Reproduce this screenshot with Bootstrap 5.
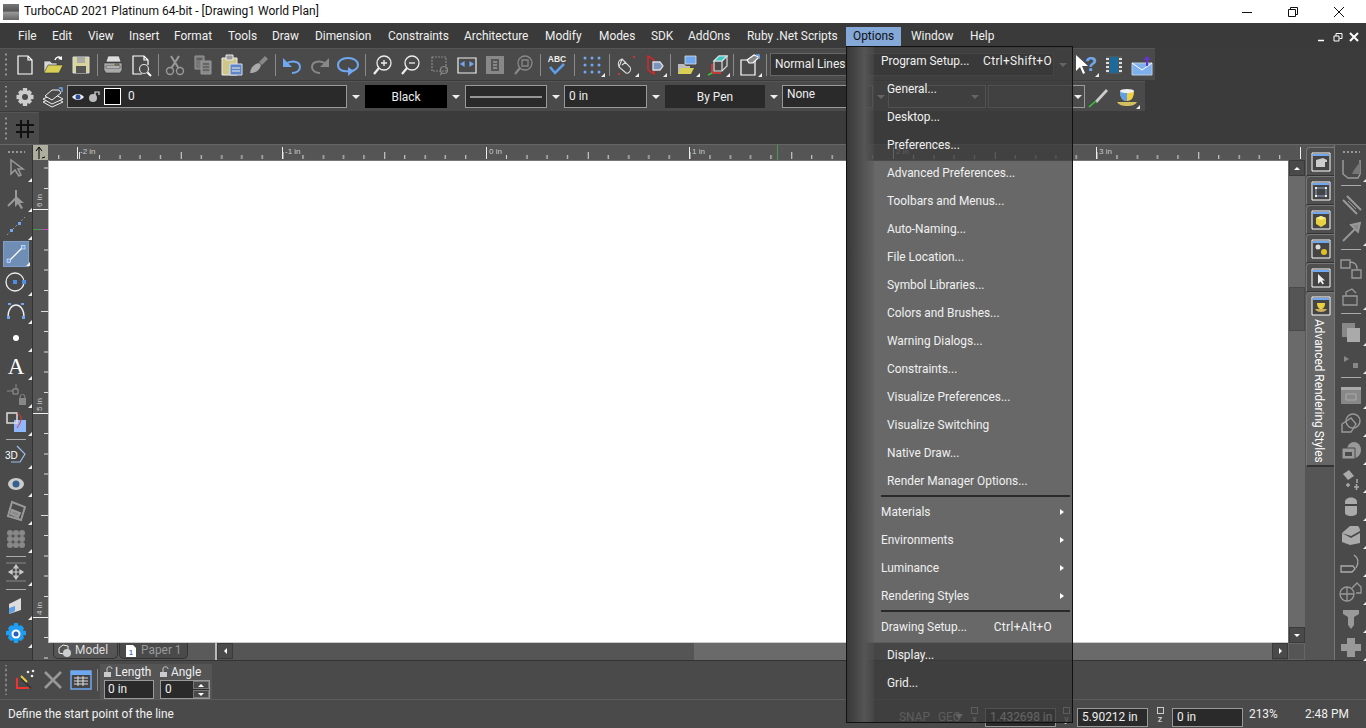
<!DOCTYPE html>
<html lang="en">
<head>
<meta charset="utf-8">
<title>TurboCAD</title>
<link href="https://cdn.jsdelivr.net/npm/bootstrap@5.3.0/dist/css/bootstrap.min.css" rel="stylesheet">
<style>
html,body{height:100%;overflow:hidden}
body{font-family:Roboto,"Liberation Sans",sans-serif;font-size:11.9px;background:#3a3a3a;color:#f0f0f0;line-height:1.2}
.app{width:1366px;height:728px;position:relative}
.titlebar{height:23px;background:#fff;color:#111;font-size:12px;flex:none}
.appicon{width:16px;height:16px;margin:0 5px 0 3px;background:linear-gradient(#777,#555 45%,#999 50%,#666)}
.wbtns{width:138px;justify-content:space-around;margin-right:4px}
.menubar{height:25px;flex:none;padding-top:2px;display:grid;grid-template-columns:10px 34px 36px 41px 45px 54px 44px 43px 73px 76px 81px 54px 52px 37px 59px 107px 55px 10px 59px 40px 1fr auto;align-items:center;background:#3a3a3a}
.mi{padding-left:8px;white-space:nowrap;height:19px;line-height:19px}
.mi-on{background:#84a8d8;color:#111;padding-left:7px}
.mdi{padding-right:7px;gap:6px}
.grip{width:11px;flex:none;align-self:stretch;background:radial-gradient(circle at 50% 50%,#999 0 1px,transparent 1.2px) center/4px 5px repeat-y;margin:4px 0}
.tbrow{background:#3b3b3b;flex:none}
.tb{background:#4a4a4a;align-items:center}
.r1{height:33px}.r2{height:31px}.r3{height:33px;border-bottom:1px solid #666}
.r1 .tb{width:1155px;height:32px;border-top:1px solid #555}
.r2 .tb{width:1145px;height:30px;border-top:1px solid #555}
.r3 .tb{width:39px;height:32px;border-top:1px solid #555}
.ib{width:28px;height:28px;display:flex;align-items:center;justify-content:center;position:relative;flex:none}
.ib svg{width:24px;height:24px;display:block}
.tri::after{content:"";position:absolute;right:1px;bottom:2px;border-left:4px solid transparent;border-bottom:4px solid #eee}
.sp{flex:none;height:22px;display:flex;justify-content:center}
.sp::before{content:"";width:1px;background:#8a8a8a}
.s4{width:4px}.s5{width:5px}.s6{width:6px}.s7{width:7px}
.cbox{border:1px solid #999;background:#2a2a2a;height:23px;display:flex;align-items:center;flex:none;color:#eee;padding-left:4px;white-space:nowrap;overflow:hidden}
.blk{background:#000;border-color:#000;justify-content:center;padding:2px 0 0}
.dark{background:#2a2a2a;border-color:#2a2a2a;justify-content:center;padding:2px 0 0}
.arr{width:18px;flex:none;display:flex;justify-content:center}
.a17{width:17px}.a15{width:15px}.a12{width:12px}
.arr::before{content:"";border-left:4px solid transparent;border-right:4px solid transparent;border-top:4px solid #eee}
.wl{width:280px;gap:3px;padding-left:3px}
.wd82{width:82px}.wd83{width:83px}.wd100{width:100px}.wd91{width:91px}.wd98{width:98px}.wd97{width:97px}
.wnorm{width:284px;color:#eee;border-color:#666;background:#333}
.boxtop{align-items:flex-start;padding-top:1px}
.swatch{width:17px;height:17px;background:#000;border:1px solid #fff;display:inline-block}
.gap2px{margin-left:2px}
.inner{flex:1;height:19px;background:#555;margin:0 2px 0 -2px}
.work{display:grid;grid-template-columns:33px 15px 1240px 17px 30px 31px;grid-template-rows:15px 483px 17px;height:515px;background:#555;flex:none}
.ltb{grid-column:1;grid-row:1/4;background:#4a4a4a;display:flex;flex-direction:column;align-items:center;padding-top:5px;border-right:1px solid #333}
.ltb .ib.act{background:#6f8db5;border:1px solid #7f9fca;width:26px;height:26px;margin:1px 0}
.ltb .tri::after,.rtb .tri::after{bottom:0;right:-2px}
.hsep{width:20px;height:1px;background:#aaa;flex:none;margin:3px 0 2px}
.ltb .hsep{margin-bottom:1px}
.ltb .hsep.hsl{margin-bottom:2px}
.mt2px{margin-top:2px}.mt1px{margin-top:1px}
.dots{height:4px;width:18px;flex:none;background:radial-gradient(circle,#999 0 1px,transparent 1.2px) 0 0/4px 4px repeat-x}
.corner{grid-column:2;grid-row:1;background:#aeae9f;display:flex;align-items:center;justify-content:center;color:#000}
.rul{background:#555;overflow:hidden}
.rul svg{display:block}
.rulh{grid-column:3/5;grid-row:1}
.rulv{grid-column:2;grid-row:2/4}
.canv{grid-column:3;grid-row:2;background:#fff;border-left:1px solid #bbb;border-bottom:1px solid #ccc;border-top:1px solid #777}
.vsc{grid-column:4;grid-row:2;background:#6a6a6a;display:flex;flex-direction:column;align-items:center}
.vcorner{grid-column:4;grid-row:3;background:#555;border:1px solid #666}
.sb{width:16px;height:16px;background:#4a4a4a;border:1px solid #3a3a3a;display:flex;align-items:center;justify-content:center;flex:none}
.up::before{content:"";border:3px solid transparent;border-top:0;border-bottom:3px solid #fff}
.dn::before{content:"";border:3px solid transparent;border-bottom:0;border-top:3px solid #fff}
.lf::before{content:"";border:3px solid transparent;border-left:0;border-right:3px solid #fff}
.rt::before{content:"";border:3px solid transparent;border-right:0;border-left:3px solid #fff}
.vthumb{width:16px;height:44px;background:#555;border:1px solid #4a4a4a;margin-top:111px;margin-bottom:auto;flex:none}
.tabs{grid-row:1/4;grid-column:5;background:#555;display:flex;flex-direction:column;padding-top:2px;border-right:1px solid #777}
.ptab{height:29px;border:1px solid #777;border-right:0;border-bottom:1px solid #333;border-radius:4px 0 0 0;margin-left:1px;display:flex;justify-content:center;align-items:center;background:#4f4f4f;flex:none}
.ptab svg{width:20px;height:20px;flex:none}
.ptab.on{height:175px;background:#666;flex-direction:column;justify-content:flex-start;padding-top:3px;border-bottom:2px solid #333}
.vtxt{writing-mode:vertical-rl;color:#fff;margin:3px 3px 0 0;white-space:nowrap}
.rtb{grid-row:1/4;grid-column:6;background:#4a4a4a;display:flex;flex-direction:column;align-items:center;padding-top:5px}
.bottomstrip{grid-column:3;grid-row:3;background:#555;display:flex;align-items:stretch;padding-left:5px;height:17px}
.mtab{height:16px;background:#555;border:1px solid #333;border-top:0;border-radius:0 0 5px 5px;display:flex;align-items:center;gap:3px;padding:0 4px;color:#ddd;flex:none;width:65px;white-space:nowrap}
.mtab.off{background:#4a4a4a;color:#999;width:69px;margin-left:1px}
.mtab svg{width:14px;height:14px;flex:none}
.hsgap{width:29px;flex:none;border-right:2px solid #bbb;background:#5a5a5a}
.hs1{width:461px;background:#555}
.hs2{flex:1;background:#6a6a6a}
.hsb{width:16px;height:16px;background:#4a4a4a;border:1px solid #3a3a3a;display:flex;align-items:center;justify-content:center;flex:none}
.cmd{height:40px;background:#4a4a4a;border-top:1px solid #333;border-bottom:1px solid #5c5c5c;align-items:center;flex:none}
.lenbox{background:#555;width:112px;height:35px;margin-left:1px;padding:0 4px;align-self:flex-end;gap:6px}
.lab{height:16px;line-height:16px;color:#eee;display:flex;align-items:center}
.lab svg{margin-left:-1px}
.inp{height:19px;border:1px solid #999;background:#2a2a2a;color:#eee;padding-left:3px;display:flex;align-items:center;white-space:nowrap;width:50px}
.spin{width:16px;display:flex;flex-direction:column;gap:1px;flex:none}
.spin span{height:8px;background:#4a4a4a;border:1px solid #777;display:flex;align-items:center;justify-content:center}
.status{height:28px;background:#4a4a4a;padding-left:8px;white-space:nowrap;flex:none}
.statr{margin-left:auto;align-items:center}
.sn{color:#ccc;margin-top:6px}
.ck{width:7px;height:7px;border:1px solid #ccc;display:block;margin-bottom:1px}
.axl{display:flex;flex-direction:column;align-items:center;width:21px;font-size:9px;line-height:9px;font-weight:500;color:#ccc;margin-top:3px}
.axz{width:24px}
.stbox{width:71px;height:19px;border:1px solid #999;background:#2a2a2a;padding-left:4px;display:flex;align-items:center;color:#eee;margin-top:6px}
.stbox-z{margin-right:6px}
.arr-w{width:0;height:0;border:4px solid transparent;border-top:5px solid #eee;margin:8px 1px 0 -6px}
.stat-z{width:56px}
.stat-t{width:61px}
.dropdown-menu.tcm{left:846px;top:46px;width:227px;height:677px;margin:0;padding:0;border:1px solid #111;border-radius:0;background:rgba(60,60,60,.774);font-size:11.9px;display:block;color:#f0f0f0;min-width:0;z-index:20}
.tcm::before{content:"";position:absolute;left:0;top:0;bottom:0;width:27px;background:linear-gradient(90deg,#383838,#555 65%,rgba(85,85,85,.3))}
.tcm .dropdown-item{height:28px;padding:0 8px 0 34px;display:flex;align-items:center;color:#f0f0f0;justify-content:space-between;position:relative}
.tcm .dropdown-item.ind{padding-left:40px}
.tcm .hassub::after{content:"";border:3.5px solid transparent;border-right:0;border-left:4px solid #fff}
.tcm .dropdown-divider{height:3px;margin:0 2px 0 34px;border-top:2px solid #2a2a2a;opacity:1}
.tcm .k{margin-right:12px;letter-spacing:.35px}
</style>
</head>
<body>
<div class="app d-flex flex-column">
  <div class="titlebar d-flex align-items-center">
    <span class="appicon"></span><span class="flex-grow-1">TurboCAD 2021 Platinum 64-bit - [Drawing1 World Plan]</span>
    <div class="d-flex wbtns">
      <svg width="12" height="12" viewBox="0 0 12 12"><path d="M1 6.5h10" stroke="#111"/></svg>
      <svg width="12" height="12" viewBox="0 0 12 12" fill="none" stroke="#111"><path d="M1.5 3.5h7v7h-7zM3.5 3.500v-2h7v7h-2"/></svg>
      <svg width="12" height="12" viewBox="0 0 12 12"><path d="M1 1l10 10M11 1L1 11" stroke="#111"/></svg>
    </div>
  </div>
  <div class="menubar">
    <span></span>
    <span class="mi">File</span><span class="mi">Edit</span><span class="mi">View</span><span class="mi">Insert</span><span class="mi">Format</span><span class="mi">Tools</span><span class="mi">Draw</span><span class="mi">Dimension</span><span class="mi">Constraints</span><span class="mi">Architecture</span><span class="mi">Modify</span><span class="mi">Modes</span><span class="mi">SDK</span><span class="mi">AddOns</span><span class="mi">Ruby .Net Scripts</span><span class="mi mi-on">Options</span><span></span><span class="mi ps-0">Window</span><span class="mi ps-0">Help</span><span></span>
    <div class="d-flex mdi">
      <svg width="10" height="10" viewBox="0 0 10 10"><path d="M1 8.500h6" stroke="#fff" stroke-width="1.500"/></svg>
      <svg width="10" height="10" viewBox="0 0 10 10" fill="none" stroke="#fff"><path d="M1 4h5v5H1zM3 4V1.500h6v5H6.500"/></svg>
      <svg width="10" height="10" viewBox="0 0 10 10"><path d="M1 1l8 8M9 1L1 9" stroke="#fff" stroke-width="2"/></svg>
    </div>
  </div>

  <div class="tbrow r1 d-flex">
    <div class="tb d-flex">
      <span class="grip"></span>
      <span class="ib"><svg viewBox="0 0 24 24" fill="none" stroke="#fff" stroke-width="1.200"><path d="M5 3h10l4 4v14H5zM15 3v4h4"/></svg></span>
      <span class="ib"><svg viewBox="0 0 24 24"><path d="M3 20V8h6l2 2h5v3" fill="#d8d8d8" stroke="#333" stroke-width=".6"/><path d="M3 20l4-8h15l-4 8z" fill="#d9cf55" stroke="#333" stroke-width=".6"/><path d="M14 7c1-3 4-4 6-2" fill="none" stroke="#fff" stroke-width="1.500"/><path d="M21 3l0 4-4-1z" fill="#fff"/></svg></span>
      <span class="ib"><svg viewBox="0 0 24 24"><path d="M4 4h16v16H4z" fill="#d9d49a" stroke="#ddd"/><path d="M8 4h8v6H8z" fill="#aaa"/><path d="M7 13h10v7H7z" fill="#555"/></svg></span>
      <span class="sp s4"></span>
      <span class="ib"><svg viewBox="0 0 24 24" stroke="#333" stroke-width=".6"><path d="M7 3h11l2 6H5z" fill="#ddd"/><path d="M3 10h18v7l-2 3H5l-2-3z" fill="#aaa"/><path d="M5 13h14v2H5z" fill="#e8e8e8"/><path d="M14 11h4v1h-4z" fill="#d8c850"/></svg></span>
      <span class="ib"><svg viewBox="0 0 24 24" fill="none" stroke="#fff" stroke-width="1.200"><path d="M13 21H4V3h11l4 4v5M15 3v4h4"/><circle cx="15" cy="16" r="4.500" stroke="#ddd"/><path d="M18.500 19.500L22 23" stroke-width="2"/></svg></span>
      <span class="sp s6"></span>
      <span class="ib"><svg viewBox="0 0 24 24" fill="none" stroke="#999" stroke-width="1.400"><circle cx="7" cy="18" r="3.500"/><circle cx="17" cy="18" r="3.500"/><path d="M8.500 15L16 3M15.500 15L8 3" stroke-width="2"/></svg></span>
      <span class="ib"><svg viewBox="0 0 24 24" fill="#777" stroke="#999"><path d="M4 3h9v13H4z"/><path d="M10 8h10v13H10z" fill="#888"/><path d="M12 11h6M12 14h6M12 17h6M6 6h5" stroke="#444"/></svg></span>
      <span class="ib"><svg viewBox="0 0 24 24"><path d="M3 5h15v17H3z" fill="#cfc68a" stroke="#eee"/><path d="M7 2h7v5H7z" fill="#999" stroke="#eee"/><path d="M11 11h12v11H11z" fill="#5c86c4" stroke="#dde"/><path d="M13 15h8M13 18h8" stroke="#eee"/></svg></span>
      <span class="ib"><svg viewBox="0 0 24 24"><path d="M12 9l6-6 3 3-6 6z" fill="#888"/><path d="M3 20c1-6 4-9 9-10l2 2c-1 5-5 8-11 8z" fill="#aaa"/></svg></span>
      <span class="sp s5"></span>
      <span class="ib"><svg viewBox="0 0 24 24" fill="none" stroke="#6fa8f0" stroke-width="2"><path d="M6 11c5-4 14-3 14 3 0 4-4 6-8 6"/><path d="M3 5v9h9z" fill="#6fa8f0" stroke="none"/></svg></span>
      <span class="ib"><svg viewBox="0 0 24 24" fill="none" stroke="#888" stroke-width="2"><path d="M18 11c-5-4-14-3-14 3 0 4 4 6 8 6"/><path d="M21 5v9h-9z" fill="#888" stroke="none"/></svg></span>
      <span class="ib"><svg viewBox="0 0 24 24" fill="none" stroke="#6fa8f0" stroke-width="2"><path d="M13 18c-6 1-11-1-11-6 0-4 4-7 10-7s10 3 10 7c0 3-3 5-6 6"/><path d="M12 14v9l6-5z" fill="#6fa8f0" stroke="none"/></svg></span>
      <span class="sp s7"></span>
      <span class="ib"><svg viewBox="0 0 24 24" fill="none" stroke="#eee" stroke-width="1.300"><circle cx="13" cy="10" r="7"/><path d="M8 15l-5 6" stroke-width="2.200"/><path d="M10 10h6M13 7v6"/></svg></span>
      <span class="ib"><svg viewBox="0 0 24 24" fill="none" stroke="#eee" stroke-width="1.300"><circle cx="13" cy="10" r="7"/><path d="M8 15l-5 6" stroke-width="2.200"/><path d="M10 10h6"/></svg></span>
      <span class="ib"><svg viewBox="0 0 24 24" fill="none" stroke="#888" stroke-width="1.200"><path d="M5 4h14v14H5z" stroke-dasharray="2 1"/><circle cx="17" cy="17" r="3.500"/><path d="M15 20l-2 2"/></svg></span>
      <span class="ib"><svg viewBox="0 0 24 24" fill="none" stroke="#eee" stroke-width="1.200"><path d="M3 5h18v15H3z"/><path d="M6 11l3-2v4zM18 11l-3-2v4z" fill="#6fa8f0" stroke="#6fa8f0"/></svg></span>
      <span class="ib"><svg viewBox="0 0 24 24"><path d="M3 3h18v18H3z" fill="#888"/><path d="M8 6h8v12H8z" fill="#555"/><path d="M10 9h4M10 12h4M10 15h4" stroke="#bbb"/></svg></span>
      <span class="ib"><svg viewBox="0 0 24 24" fill="none" stroke="#888" stroke-width="1.300"><circle cx="14" cy="10" r="7"/><path d="M9 15l-5 6" stroke-width="2.200"/><path d="M11 7h6v6h-6z"/></svg></span>
      <span class="sp s6"></span>
      <span class="ib"><svg viewBox="0 0 24 24"><text x="12" y="9" font-size="8.500" font-weight="700" fill="#eee" text-anchor="middle" font-family="Liberation Sans">ABC</text><path d="M5 14l5 6 9-9" fill="none" stroke="#5f9fe8" stroke-width="2.500"/></svg></span>
      <span class="sp s7"></span>
      <span class="ib tri"><svg viewBox="0 0 24 24" fill="#6fa8f0"><circle cx="5" cy="5" r="1.500"/><circle cx="12" cy="5" r="1.500"/><circle cx="19" cy="5" r="1.500"/><circle cx="5" cy="12" r="1.500"/><circle cx="12" cy="12" r="1.500"/><circle cx="19" cy="12" r="1.500"/><circle cx="5" cy="19" r="1.500"/><circle cx="12" cy="19" r="1.500"/><circle cx="19" cy="19" r="1.500"/></svg></span>
      <span class="sp s6"></span>
      <span class="ib tri"><svg viewBox="0 0 24 24" fill="none" stroke="#ddd" stroke-width="1.100"><path d="M8 6l8 8c2 3-1 7-4 6l-7-6c-2-4 0-7 3-8zM8 6l-3 8M8 12l4-3"/><path d="M4 21h2M19 4h2" stroke="#e33" stroke-width="1.500"/></svg></span>
      <span class="ib tri"><svg viewBox="0 0 24 24" stroke-width="1.300"><path d="M6 3l6 4v14l-6-4z" fill="none" stroke="#e22"/><path d="M11 9h7l3 4-3 4h-7z" fill="#7b94c0" stroke="#ddd"/></svg></span>
      <span class="sp s5"></span>
      <span class="ib tri"><svg viewBox="0 0 24 24"><path d="M10 3h11v8H10z" fill="#6fa8f0" stroke="#ddd" stroke-width=".8"/><path d="M3 21V11h6l2 2h4v8z" fill="#bbb"/><path d="M3 21l3-6h13l-3 6z" fill="#d9cf55"/></svg></span>
      <span class="ib tri gap2px"><svg viewBox="0 0 24 24" fill="none" stroke-width="1.200"><path d="M9 8l5-5h8v10l-5 5H9z" stroke="#ddd"/><path d="M9 8h8v10M17 8l5-5" stroke="#ddd"/><path d="M9 8l5-5h8l-5 5z" fill="#3cc" stroke="#ddd"/><path d="M7 20V11M7 20h9" stroke="#e33" stroke-width="1.500"/><path d="M3 22l4-2" stroke="#3c3" stroke-width="1.500"/></svg></span>
      <span class="sp s4"></span>
      <span class="ib tri"><svg viewBox="0 0 24 24" fill="none" stroke="#fff" stroke-width="1.200"><path d="M4 7h14v15H4z"/><path d="M10 7l7-5 5 2-6 6-4 0z" fill="#888"/><path d="M19 2h3v4" stroke="#6fa8f0" stroke-width="1.500"/></svg></span>
      <span class="sp s7"></span>
      <span class="cbox wnorm">Normal Lines</span>
      <span class="arr"></span>
      <span class="ib tri"><svg viewBox="0 0 24 24"><path d="M2 2v16l4-4 3 7 2-1-3-7h6z" fill="#fff"/><text x="17" y="18" font-size="20" font-weight="700" fill="#6fa8f0" text-anchor="middle" font-family="Liberation Sans">?</text></svg></span>
      <span class="ib"><svg viewBox="0 0 24 24"><path d="M4 3h16v18H4z" fill="#555"/><path d="M8 4h8v16H8z" fill="#1a6b9c"/><path d="M4 5h3v2H4zM4 9h3v2H4zM4 13h3v2H4zM4 17h3v2H4zM17 5h3v2h-3zM17 9h3v2h-3zM17 13h3v2h-3zM17 17h3v2h-3z" fill="#ddd"/></svg></span>
      <span class="ib"><svg viewBox="0 0 24 24"><path d="M2 10h20v12H2z" fill="#7fb0ee" stroke="#bcd"/><path d="M2 10l10 7 10-7" fill="none" stroke="#fff"/><path d="M17 3l4 4h-3v6h-2V7h-3z" fill="#63c"/></svg></span>
    </div>
  </div>

  <div class="tbrow r2 d-flex">
    <div class="tb d-flex">
      <span class="grip"></span>
      <span class="ib"><svg viewBox="0 0 24 24" fill="#ccc"><path d="M10 3h4l.5 3 2-1 2.500 2.500-1.500 2 3 .5v4l-3 .5 1.500 2-2.500 2.500-2-1-.5 3h-4l-.5-3-2 1L5 16.500l1.500-2-3-.5v-4l3-.5-1.500-2L7.500 5l2 1z"/><circle cx="12" cy="12" r="3" fill="#4a4a4a"/></svg></span>
      <span class="ib"><svg viewBox="0 0 24 24" fill="#4a4a4a" stroke="#eee" stroke-width="1"><path d="M2 17l9 5 11-5-9-5z"/><path d="M2 14l9 5 11-5-9-5z"/><path d="M4 11l7-6h7l2 3-9 7z"/><path d="M18 3h3v4" stroke="#6fa8f0" fill="none" stroke-width="1.500"/></svg></span>
      <span class="cbox wl"><svg width="14" height="12" viewBox="0 0 14 12"><path d="M1 6c3-4 9-4 12 0-3 4-9 4-12 0z" fill="#eee"/><circle cx="7" cy="6" r="2.500" fill="#2a4b9c"/></svg><svg width="13" height="13" viewBox="0 0 13 13"><circle cx="5" cy="8" r="4" fill="#bbb"/><path d="M7 5V2h4v3" fill="none" stroke="#ddd" stroke-width="1.200"/></svg><span class="swatch"></span><span class="ms-1">0</span></span>
      <span class="arr"></span>
      <span class="cbox blk wd82">Black</span><span class="arr"></span>
      <span class="cbox wd82 ps-1"><svg width="72" height="2" viewBox="0 0 72 2"><path d="M0 1h72" stroke="#fff"/></svg></span><span class="arr a17"></span>
      <span class="cbox wd83 ps-1">0 in</span><span class="arr"></span>
      <span class="cbox dark wd100">By Pen</span><span class="arr a17"></span>
      <span class="cbox wd91 ps-1 boxtop">None</span><span class="arr a15"></span>
      <span class="cbox wd98 bg-transparent justify-content-end pe-1"><span class="arr a12"></span></span>
      <span class="cbox wd97 gap2px bg-transparent"><span class="inner"></span><span class="arr a12"></span></span>
      <span class="ib"><svg viewBox="0 0 24 24"><path d="M8 16L19 4l2 2L10 18z" fill="#ccc"/><path d="M2 22l7-6" stroke="#3c3" stroke-width="1.500"/></svg></span>
      <span class="ib tri"><svg viewBox="0 0 24 24"><path d="M5 6h14c0 7-3 10-7 10S5 13 5 6z" fill="#f0d040"/><path d="M5 6h7v10c-4 0-7-3-7-10z" fill="#5f9fe8"/><path d="M2 17h20c-2 3-5 4-10 4s-8-1-10-4z" fill="#d4c060"/><ellipse cx="12" cy="6" rx="7" ry="2" fill="#eee"/></svg></span>
    </div>
  </div>

  <div class="tbrow r3 d-flex">
    <div class="tb d-flex">
      <span class="grip"></span>
      <span class="ib"><svg viewBox="0 0 24 24" fill="none" stroke="#111" stroke-width="2"><path d="M8 3v18M15 3v18M3 8h18M3 15h18"/></svg></span>
    </div>
  </div>

  <div class="work">
    <div class="ltb">
      <span class="dots"></span>
      <span class="ib tri"><svg viewBox="0 0 24 24" fill="none" stroke="#999" stroke-width="1.500"><path d="M7 4v14l4-4 4 6 2-1-3-6h5z"/></svg></span>
      <span class="ib tri mt2px"><svg viewBox="0 0 24 24"><path d="M4 20l8-8 0-8" stroke="#999" stroke-width="2" fill="none"/><path d="M11 9v12l3-3 3 5 2-1-3-5h4z" fill="#999"/></svg></span>
      <span class="ib tri"><svg viewBox="0 0 24 24"><path d="M3 21L21 3" stroke="#999" stroke-dasharray="2 2"/><rect x="6" y="15" width="3" height="3" fill="#6fa8f0"/><rect x="14" y="8" width="3" height="3" fill="#6fa8f0"/></svg></span>
      <span class="ib act tri"><svg viewBox="0 0 24 24"><path d="M5 19L19 5" stroke="#fff" stroke-width="1.300"/><rect x="3" y="17" width="3.500" height="3.500" fill="#6fa8f0" stroke="#fff" stroke-width=".5"/><rect x="17.500" y="3.500" width="3.500" height="3.500" fill="#6fa8f0" stroke="#fff" stroke-width=".5"/></svg></span>
      <span class="ib tri"><svg viewBox="0 0 24 24" fill="none"><circle cx="11" cy="12" r="9" stroke="#eee" stroke-width="1.300"/><rect x="9" y="10" width="4" height="4" fill="#4f8fe8"/><rect x="18" y="10" width="4" height="4" fill="#4f8fe8"/></svg></span>
      <span class="ib tri"><svg viewBox="0 0 24 24" fill="none"><path d="M4 19c0-8 4-12 8-12s8 4 8 12" stroke="#eee" stroke-width="1.300"/><path d="M3 18h3v3H3zM18 18h3v3h-3zM4 5h3v2H4zM17 5h3v2h-3z" fill="#6fa8f0"/></svg></span>
      <span class="ib tri"><svg viewBox="0 0 24 24"><circle cx="12" cy="12" r="3" fill="#fff"/></svg></span>
      <span class="ib tri"><svg viewBox="0 0 24 24"><text x="12" y="20" font-size="23" fill="#fff" text-anchor="middle" font-family="Liberation Serif">A</text></svg></span>
      <span class="ib tri"><svg viewBox="0 0 24 24" fill="#888"><path d="M3 9h6M12 2v5" stroke="#888"/><path d="M9 7h5v5H9z" fill="none" stroke="#999"/><path d="M15 16h7v7h-7z"/><circle cx="18.500" cy="15" r="2.500" fill="none" stroke="#888"/></svg></span>
      <span class="ib tri"><svg viewBox="0 0 24 24"><path d="M10 10h12v12H10z" fill="#8fb8ff"/><path d="M3 3h10v10H3z" fill="none" stroke="#ddd" stroke-width="1.500"/><path d="M13 3c6 3 5 8 0 15" fill="none" stroke="#e33"/></svg></span>
      <span class="hsep"></span>
      <span class="ib tri"><svg viewBox="0 0 24 24"><text x="1" y="16" font-size="10" fill="#fff" font-family="Liberation Sans">3D</text><path d="M13 3l8 8-5 8H7" fill="none" stroke="#9cc0f0" stroke-width="1.200"/></svg></span>
      <span class="ib tri"><svg viewBox="0 0 24 24"><ellipse cx="12" cy="13" rx="8" ry="6" fill="#ccc"/><circle cx="12" cy="13" r="3.500" fill="#35608f"/></svg></span>
      <span class="ib tri"><svg viewBox="0 0 24 24" fill="none" stroke="#999" stroke-width="2"><path d="M8 3l13 5-4 13L4 17z"/><path d="M8 11l8 3-2 4-7-3z" fill="#888"/></svg></span>
      <span class="ib tri"><svg viewBox="0 0 24 24" fill="#888"><circle cx="6" cy="6" r="3"/><circle cx="12" cy="6" r="3"/><circle cx="18" cy="6" r="3"/><circle cx="6" cy="12" r="3"/><circle cx="12" cy="12" r="3"/><circle cx="18" cy="12" r="3"/><circle cx="6" cy="18" r="3"/><circle cx="12" cy="18" r="3"/><circle cx="18" cy="18" r="3"/></svg></span>
      <span class="hsep"></span>
      <span class="ib tri"><svg viewBox="0 0 24 24" fill="none" stroke="#ccc" stroke-width="1.200"><path d="M2 3h20M2 21h20" stroke="#888"/><path d="M12 6v12M6 12h12M12 5l-2 3h4zM12 19l-2-3h4zM5 12l3-2v4zM19 12l-3-2v4z"/></svg></span>
      <span class="hsep hsl"></span>
      <span class="ib tri"><svg viewBox="0 0 24 24"><path d="M5 10l12-6v12L5 20z" fill="#ddd"/><path d="M5 14l6-2v5l-6 3z" fill="#5f9fe8"/></svg></span>
      <span class="ib tri"><svg viewBox="0 0 24 24"><path d="M10 1h4l.5 3 2.500-1 3 3-1 2.500 3 .5v4l-3 .5 1 2.500-3 3-2.500-1-.5 3h-4l-.5-3-2.500 1-3-3 1-2.500-3-.5v-4l3-.5-1-2.500 3-3 2.500 1z" fill="#1d9ef2"/><circle cx="12" cy="12" r="4.500" fill="#fff"/><circle cx="12" cy="12" r="2.500" fill="#2b5fc0"/></svg></span>
    </div>
    <div class="corner"><svg width="11" height="13" viewBox="0 0 11 13"><path d="M4 13V2M1 5l3-4 3 4M7 12l3-1" stroke="#000" fill="none"/></svg></div>
    <div class="rul rulh">
      <svg width="1257" height="15" viewBox="0 0 1257 15">
        <defs><pattern id="tickh" patternUnits="userSpaceOnUse" width="101.750" height="15" patternTransform="translate(31 0)"><path d="M20.500 10v4M41 10v4M61 10v4M81.500 10v4M0.500 7v7" stroke="#ddd"/></pattern></defs>
        <rect width="1257" height="15" fill="url(#tickh)"/>
        <g stroke="#eee"><path d="M29.500 2v12M234.500 2v12M438.500 2v12M641.500 2v12M845.500 2v12M1048.500 2v12M1252.500 2v12"/></g>
        <path d="M729.500 0v15" stroke="#4a9a4a"/>
        <g fill="#ccc" font-size="8" font-family="Liberation Sans"><text x="32" y="9">-2 in</text><text x="237" y="9">-1 in</text><text x="441" y="9">0 in</text><text x="644" y="9">1 in</text><text x="848" y="9">2 in</text><text x="1051" y="9">3 in</text></g>
      </svg>
    </div>
    <div class="rul rulv">
      <svg width="15" height="500" viewBox="0 0 15 500">
        <defs><pattern id="tickv" patternUnits="userSpaceOnUse" width="15" height="102" patternTransform="translate(0 49)"><path d="M11 20.500h4M11 41h4M11 61h4M11 81.500h4M8 0.500h7" stroke="#ddd"/></pattern></defs>
        <rect width="15" height="500" fill="url(#tickv)"/>
        <path d="M0 49.500h15M0 253.500h15M0 457.500h15" stroke="#eee"/>
        <path d="M0 69.500h9" stroke="#4a9a4a"/><path d="M9 69.500h6" stroke="#c4c"/>
        <g fill="#ccc" font-size="8" font-family="Liberation Sans"><text transform="translate(9 47) rotate(-90)">6 in</text><text transform="translate(9 251) rotate(-90)">5 in</text><text transform="translate(9 455) rotate(-90)">4 in</text></g>
      </svg>
    </div>
    <div class="canv"></div>
    <div class="vsc">
      <span class="sb up"></span><span class="vthumb"></span><span class="sb dn"></span>
    </div>
    <div class="bottomstrip">
      <div class="mtab"><svg viewBox="0 0 14 14"><path d="M1 4l4-3 5 1v5l-4 3-5-1z" fill="none" stroke="#eee"/><circle cx="9" cy="9" r="4" fill="#ccc"/></svg>Model</div>
      <div class="mtab off"><svg viewBox="0 0 14 14"><path d="M2 1h7l3 3v9H2z" fill="#fff"/><text x="7" y="11" font-size="8" fill="#14a" text-anchor="middle" font-family="Liberation Sans">1</text></svg>Paper 1</div>
      <span class="hsgap"></span>
      <span class="hsb lf"></span><span class="hs1"></span><span class="hs2"></span><span class="hsb rt"></span>
    </div>
    <div class="vcorner"></div>
    <div class="tabs">
      <div class="ptab"><svg viewBox="0 0 20 20"><path d="M1 1h18v18H1z" fill="#444" stroke="#fff"/><path d="M2 2h16v2H2z" fill="#6fa8f0"/><path d="M5 8l7-2 4 2v2h-2v5H5z" fill="#ccc"/></svg></div>
      <div class="ptab"><svg viewBox="0 0 20 20"><path d="M1 1h18v18H1z" fill="#444" stroke="#fff"/><path d="M2 2h16v2H2z" fill="#6fa8f0"/><path d="M5 7h10v8H5z" fill="none" stroke="#8aa8d0"/><path d="M4 6h2v2H4zM14 6h2v2h-2zM4 14h2v2H4zM14 14h2v2h-2z" fill="#eee"/></svg></div>
      <div class="ptab"><svg viewBox="0 0 20 20"><path d="M1 1h18v18H1z" fill="#444" stroke="#fff"/><path d="M2 2h16v2H2z" fill="#6fa8f0"/><path d="M10 6l5 2v6l-5 3-5-3V8z" fill="#e8d040"/><path d="M10 6l5 2-5 2-5-2z" fill="#f5ec90"/></svg></div>
      <div class="ptab"><svg viewBox="0 0 20 20"><path d="M1 1h18v18H1z" fill="#444" stroke="#fff"/><path d="M2 2h16v2H2z" fill="#6fa8f0"/><circle cx="7" cy="8" r="2.500" fill="#ddd"/><circle cx="13" cy="13" r="3" fill="#e0c020"/></svg></div>
      <div class="ptab"><svg viewBox="0 0 20 20"><path d="M1 1h18v18H1z" fill="#444" stroke="#fff"/><path d="M2 2h16v2H2z" fill="#6fa8f0"/><path d="M7 6v10l2.500-2.500 2 3 1.500-1-2-3h3z" fill="#eee"/></svg></div>
      <div class="ptab on"><svg viewBox="0 0 20 20"><path d="M1 1h18v18H1z" fill="#444" stroke="#fff"/><path d="M2 2h16v2H2z" fill="#6fa8f0"/><path d="M6 7h8c0 4-2 6-4 6s-4-2-4-6z" fill="#e8d040"/><path d="M4 13h12c-1 2-3 3-6 3s-5-1-6-3z" fill="#ccb060"/></svg><span class="vtxt">Advanced Rendering Styles</span></div>
    </div>
    <div class="rtb">
      <span class="dots"></span>
      <span class="ib tri"><svg viewBox="0 0 24 24" fill="none" stroke="#999" stroke-width="1.500"><path d="M4 4v14l5 4h10l2-4V4"/><path d="M15 14l6-8v12h-8z" fill="#777" stroke="none"/></svg></span>
      <span class="hsep"></span>
      <span class="ib mt2px"><svg viewBox="0 0 24 24" fill="none" stroke="#999" stroke-width="2"><path d="M4 8l14 14M8 4l14 14"/><path d="M9 9l8 8" stroke-width="1"/></svg></span>
      <span class="ib tri"><svg viewBox="0 0 24 24" fill="none" stroke="#999" stroke-width="1.800"><path d="M4 21L16 9"/><path d="M12 5l9-2-2 9z" fill="#888"/></svg></span>
      <span class="hsep"></span>
      <span class="ib mt2px"><svg viewBox="0 0 24 24" fill="none" stroke="#999" stroke-width="1.400"><path d="M2 4h9v8H2zM13 14h9v8h-9zM11 6c5 0 7 3 7 7"/></svg></span>
      <span class="ib tri"><svg viewBox="0 0 24 24" fill="none" stroke="#999" stroke-width="1.300"><path d="M4 12h14v9H4zM7 12V8l6-3 4 4"/></svg></span>
      <span class="hsep"></span>
      <span class="ib tri mt2px"><svg viewBox="0 0 24 24" fill="#888"><path d="M3 3h13v14H3z"/><path d="M8 8h13v14H8z" fill="#aaa"/></svg></span>
      <span class="ib tri"><svg viewBox="0 0 24 24" fill="#888"><path d="M5 8l5 3-5 3zM14 15h5v5h-5z"/></svg></span>
      <span class="hsep"></span>
      <span class="ib tri mt1px"><svg viewBox="0 0 24 24"><path d="M2 4h20v17H2z" fill="#888"/><path d="M2 4h20v3H2z" fill="#aaa"/><path d="M7 11h10v6H7z" fill="none" stroke="#aaa"/></svg></span>
      <span class="ib tri"><svg viewBox="0 0 24 24" fill="none" stroke="#999" stroke-width="1.400"><circle cx="14" cy="10" r="7"/><path d="M3 13l9-6 5 6-5 8H3z"/></svg></span>
      <span class="ib tri"><svg viewBox="0 0 24 24"><ellipse cx="15" cy="11" rx="7" ry="8" fill="#999"/><path d="M3 9h13v11H3z" fill="#999" stroke="#4a4a4a"/><path d="M6 13h7v4H6z" fill="#4a4a4a"/></svg></span>
      <span class="ib tri"><svg viewBox="0 0 24 24" fill="#aaa"><path d="M4 7l6-4 5 6-6 4z"/><path d="M7 18h4M9 16v4M15 20h5M17.500 17v6M18 12v4" stroke="#aaa" stroke-width="1.500"/></svg></span>
      <span class="ib tri"><svg viewBox="0 0 24 24"><path d="M6 7c0-6 12-6 12 0v11c0 4-12 4-12 0z" fill="#aaa"/><path d="M6 9h12v2H6z" fill="#444"/></svg></span>
      <span class="ib tri"><svg viewBox="0 0 24 24" fill="#aaa"><path d="M3 10l8-7h8c2 2 2 4 2 6v11l-10 2-8-3z"/><path d="M3 10l9 3 9-5v2l-9 5z" fill="#4a4a4a"/></svg></span>
      <span class="ib tri"><svg viewBox="0 0 24 24" fill="none" stroke="#aaa" stroke-width="1.300"><path d="M2 15h12l2 3-3 3H2zM15 4c3 2 6 6 2 13"/></svg></span>
      <span class="ib tri"><svg viewBox="0 0 24 24" fill="none" stroke="#999" stroke-width="1.300"><circle cx="8" cy="15" r="7"/><path d="M1 15h14M8 8v14M13 9l5-5 4 4v6h-5"/></svg></span>
      <span class="ib tri"><svg viewBox="0 0 24 24" fill="#999"><path d="M4 3h16v4l-5 3v8l-3 4-3-4v-8L4 7z"/></svg></span>
      <span class="ib tri"><svg viewBox="0 0 24 24" fill="#999"><path d="M8 3h8v6h6v7h-6v6H8v-6H2V9h6z"/></svg></span>
    </div>
  </div>

  <div class="cmd d-flex">
    <span class="grip"></span>
    <span class="ib"><svg viewBox="0 0 24 24"><path d="M4 10v10h12" fill="none" stroke="#e33" stroke-width="2"/><path d="M8 11l10 9" stroke="#333" stroke-width="1.500"/><path d="M8 8l6 6" stroke="#e8d040" stroke-width="2"/><g fill="#eee"><circle cx="15" cy="4" r="1.300"/><circle cx="20" cy="3" r="1.300"/><circle cx="19" cy="8" r="1.300"/></g></svg></span>
    <span class="ib"><svg viewBox="0 0 24 24"><path d="M4 4l16 16M20 4L4 20" stroke="#999" stroke-width="2.500"/></svg></span>
    <span class="ib"><svg viewBox="0 0 24 24"><path d="M2 3h20v18H2z" fill="#444" stroke="#6fa8f0" stroke-width="1.500"/><path d="M2 3h20v4H2z" fill="#6fa8f0"/><path d="M5 10h14M5 13h14M5 16h14M9 8v10M14 8v10" stroke="#ddd"/></svg></span>
    <span class="sp s4"></span>
    <div class="lenbox d-flex">
      <div><div class="lab"><svg width="12" height="12" viewBox="0 0 12 12"><path d="M1 6h7v5H1z" fill="#ccc"/><path d="M4 6V3c0-3 5-3 5 0" fill="none" stroke="#ccc"/></svg>Length</div><div class="inp">0 in</div></div>
      <div><div class="lab"><svg width="12" height="12" viewBox="0 0 12 12"><path d="M1 6h7v5H1z" fill="#ccc"/><path d="M4 6V3c0-3 5-3 5 0" fill="none" stroke="#ccc"/></svg>Angle</div>
      <div class="d-flex inp p-0"><span class="flex-grow-1 ps-1">0</span><span class="spin"><span class="up"></span><span class="dn"></span></span></div></div>
    </div>
  </div>

  <div class="status d-flex align-items-center">
    <span>Define the start point of the line</span>
    <div class="statr d-flex">
      <span class="sn">SNAP</span><span class="sn ms-2">GEO</span>
      <span class="arr-w"></span>
      <span class="axl"><i class="ck"></i>x</span><span class="stbox">1.432698 in</span>
      <span class="axl"><i class="ck"></i>y</span><span class="stbox">5.90212 in</span>
      <span class="axl axz"><i class="ck"></i>z</span><span class="stbox stbox-z">0 in</span>
      <span class="stat-z">213%</span><span class="stat-t">2:48 PM</span>
    </div>
  </div>

  <div class="dropdown-menu show tcm position-absolute">
    <a class="dropdown-item">Program Setup...<span class="k">Ctrl+Shift+O</span></a>
    <a class="dropdown-item ind">General...</a>
    <a class="dropdown-item ind">Desktop...</a>
    <a class="dropdown-item ind">Preferences...</a>
    <a class="dropdown-item ind">Advanced Preferences...</a>
    <a class="dropdown-item ind">Toolbars and Menus...</a>
    <a class="dropdown-item ind">Auto-Naming...</a>
    <a class="dropdown-item ind">File Location...</a>
    <a class="dropdown-item ind">Symbol Libraries...</a>
    <a class="dropdown-item ind">Colors and Brushes...</a>
    <a class="dropdown-item ind">Warning Dialogs...</a>
    <a class="dropdown-item ind">Constraints...</a>
    <a class="dropdown-item ind">Visualize Preferences...</a>
    <a class="dropdown-item ind">Visualize Switching</a>
    <a class="dropdown-item ind">Native Draw...</a>
    <a class="dropdown-item ind">Render Manager Options...</a>
    <div class="dropdown-divider"></div>
    <a class="dropdown-item hassub">Materials</a>
    <a class="dropdown-item hassub">Environments</a>
    <a class="dropdown-item hassub">Luminance</a>
    <a class="dropdown-item hassub">Rendering Styles</a>
    <div class="dropdown-divider"></div>
    <a class="dropdown-item">Drawing Setup...<span class="k">Ctrl+Alt+O</span></a>
    <a class="dropdown-item ind">Display...</a>
    <a class="dropdown-item ind">Grid...</a>
  </div>
</div>
</body>
</html>
